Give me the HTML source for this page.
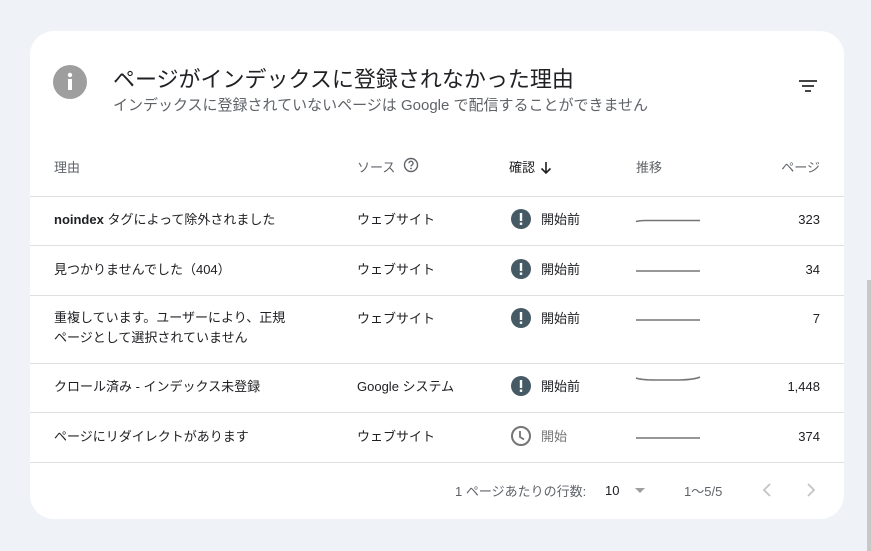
<!DOCTYPE html>
<html><head><meta charset="utf-8"><style>
*{margin:0;padding:0;box-sizing:border-box}
body{width:871px;height:551px;background:#eff2f7;font-family:"Liberation Sans","Noto Sans CJK JP",sans-serif;position:relative;overflow:hidden;color:#202124}
.card{position:absolute;left:30px;top:31px;width:814px;height:488px;background:#fff;border-radius:24px;overflow:hidden}
.sb{position:absolute;left:867px;top:280px;width:4px;height:271px;background:#c8c8c8}
.a{position:absolute;white-space:nowrap}
.line{position:absolute;left:0;width:814px;height:1px;background:#e0e0e0}
.h{font-size:13px;color:#5f6368}
.c{font-size:13px;color:#202124}
.num{position:absolute;right:24px;font-size:13px}
</style></head><body>
<div class="card">
 <svg class="a" style="left:23px;top:34px" width="34" height="34"><circle cx="17" cy="17" r="17" fill="#9e9e9e"/><rect x="15" y="14" width="4" height="11" fill="#fff"/><circle cx="17" cy="10" r="2.2" fill="#fff"/></svg>
 <div class="a" style="left:83px;top:31px;font-size:22px;color:#202124">ページがインデックスに登録されなかった理由</div>
 <div class="a" style="left:83px;top:63px;font-size:15px;color:#5f6368">インデックスに登録されていないページは Google で配信することができません</div>
 <svg class="a" style="left:768px;top:47px" width="20" height="16"><rect x="1" y="2" width="18" height="2" fill="#444"/><rect x="4" y="7" width="12" height="2" fill="#444"/><rect x="7" y="12" width="6" height="2" fill="#444"/></svg>

 <div class="a h" style="left:24px;top:126px">理由</div>
 <div class="a h" style="left:327px;top:126px">ソース</div>
 <svg class="a" style="left:373px;top:126px" width="16" height="16"><circle cx="8" cy="8" r="6.5" fill="none" stroke="#5f6368" stroke-width="1.4"/><path d="M6 6.3a2 2 0 1 1 2.8 1.8c-.6.3-.8.7-.8 1.4" fill="none" stroke="#5f6368" stroke-width="1.3"/><circle cx="8" cy="11.5" r=".9" fill="#5f6368"/></svg>
 <div class="a c" style="left:479px;top:126px">確認</div>
 <svg class="a" style="left:510px;top:130px" width="12" height="14"><path d="M6 1v11M1.5 7.5L6 12l4.5-4.5" fill="none" stroke="#202124" stroke-width="1.6"/></svg>
 <div class="a h" style="left:606px;top:126px">推移</div>
 <div class="num h" style="top:126px">ページ</div>

 <div class="line" style="top:165px"></div>
 <div class="line" style="top:214px"></div>
 <div class="line" style="top:264px"></div>
 <div class="line" style="top:332px"></div>
 <div class="line" style="top:381px"></div>
 <div class="line" style="top:431px"></div>

 <div class="a c" style="left:24px;top:178px"><b>noindex</b> タグによって除外されました</div>
 <div class="a c" style="left:327px;top:178px">ウェブサイト</div>
 <div class="a c" style="left:24px;top:228px">見つかりませんでした（404）</div>
 <div class="a c" style="left:327px;top:228px">ウェブサイト</div>
 <div class="a c" style="left:24px;top:277px;line-height:20px">重複しています。ユーザーにより、正規<br>ページとして選択されていません</div>
 <div class="a c" style="left:327px;top:277px">ウェブサイト</div>
 <div class="a c" style="left:24px;top:345px">クロール済み - インデックス未登録</div>
 <div class="a c" style="left:327px;top:345px">Google システム</div>
 <div class="a c" style="left:24px;top:395px">ページにリダイレクトがあります</div>
 <div class="a c" style="left:327px;top:395px">ウェブサイト</div>

 <svg class="a" style="left:480px;top:177px" width="22" height="22"><circle cx="11" cy="11" r="10" fill="#455a64"/><rect x="9.8" y="5" width="2.4" height="8" fill="#fff"/><rect x="9.8" y="14.5" width="2.4" height="2.4" fill="#fff"/></svg>
 <div class="a c" style="left:511px;top:178px">開始前</div>
 <svg class="a" style="left:480px;top:227px" width="22" height="22"><circle cx="11" cy="11" r="10" fill="#455a64"/><rect x="9.8" y="5" width="2.4" height="8" fill="#fff"/><rect x="9.8" y="14.5" width="2.4" height="2.4" fill="#fff"/></svg>
 <div class="a c" style="left:511px;top:228px">開始前</div>
 <svg class="a" style="left:480px;top:276px" width="22" height="22"><circle cx="11" cy="11" r="10" fill="#455a64"/><rect x="9.8" y="5" width="2.4" height="8" fill="#fff"/><rect x="9.8" y="14.5" width="2.4" height="2.4" fill="#fff"/></svg>
 <div class="a c" style="left:511px;top:277px">開始前</div>
 <svg class="a" style="left:480px;top:344px" width="22" height="22"><circle cx="11" cy="11" r="10" fill="#455a64"/><rect x="9.8" y="5" width="2.4" height="8" fill="#fff"/><rect x="9.8" y="14.5" width="2.4" height="2.4" fill="#fff"/></svg>
 <div class="a c" style="left:511px;top:345px">開始前</div>
 <svg class="a" style="left:480px;top:394px" width="22" height="22"><circle cx="11" cy="11" r="9" fill="none" stroke="#757575" stroke-width="2"/><path d="M10 6v6l4 2.5" fill="none" stroke="#757575" stroke-width="1.8"/></svg>
 <div class="a c" style="left:511px;top:395px;color:#757575">開始</div>

 <svg class="a" style="left:605px;top:182px" width="66" height="12"><path d="M1 8.5Q5 7.5 10 7.5L65 7.5" fill="none" stroke="#757575" stroke-width="1.6"/></svg>
 <svg class="a" style="left:605px;top:232px" width="66" height="12"><path d="M1 8L65 8" fill="none" stroke="#757575" stroke-width="1.6"/></svg>
 <svg class="a" style="left:605px;top:281px" width="66" height="12"><path d="M1 8L65 8" fill="none" stroke="#757575" stroke-width="1.6"/></svg>
 <svg class="a" style="left:605px;top:343px" width="66" height="12"><path d="M1 4Q6 6 20 6L45 6Q60 5.5 65 3" fill="none" stroke="#757575" stroke-width="1.6"/></svg>
 <svg class="a" style="left:605px;top:399px" width="66" height="12"><path d="M1 8L65 8" fill="none" stroke="#757575" stroke-width="1.6"/></svg>

 <div class="num c" style="top:181px">323</div>
 <div class="num c" style="top:231px">34</div>
 <div class="num c" style="top:280px">7</div>
 <div class="num c" style="top:348px">1,448</div>
 <div class="num c" style="top:398px">374</div>

 <div class="a h" style="left:425px;top:450px">1 ページあたりの行数:</div>
 <div class="a c" style="left:575px;top:452px">10</div>
 <svg class="a" style="left:604px;top:456px" width="12" height="8"><path d="M1 1h10L6 6z" fill="#9e9e9e"/></svg>
 <div class="a h" style="left:654px;top:450px">1〜5/5</div>
 <svg class="a" style="left:731px;top:451px" width="12" height="16"><path d="M9 2L3 8l6 6" fill="none" stroke="#c4c4c4" stroke-width="1.8"/></svg>
 <svg class="a" style="left:775px;top:451px" width="12" height="16"><path d="M3 2l6 6-6 6" fill="none" stroke="#c4c4c4" stroke-width="1.8"/></svg>
</div>
<div class="sb"></div>
</body></html>
